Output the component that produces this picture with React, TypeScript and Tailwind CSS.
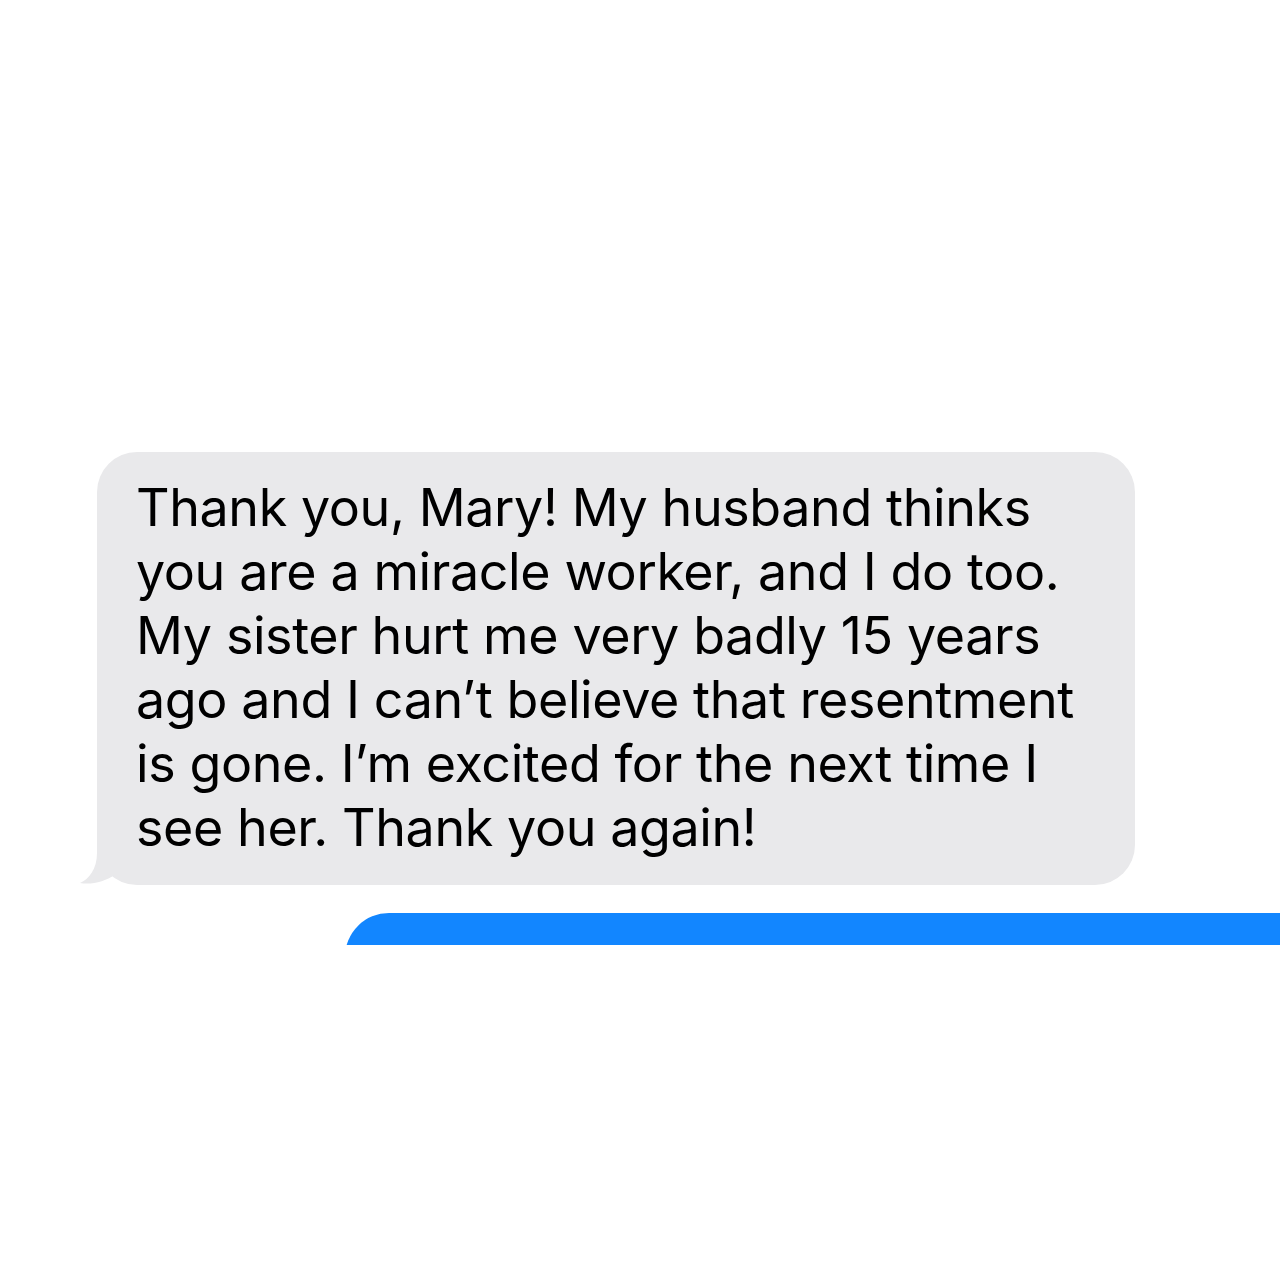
import React from 'react';

const lines = [
  'Thank you, Mary! My husband thinks',
  'you are a miracle worker, and I do too.',
  'My sister hurt me very badly 15 years',
  'ago and I can\u2019t believe that resentment',
  'is gone. I\u2019m excited for the next time I',
  'see her. Thank you again!',
];

const App: React.FC = () => {
  return (
    <div
      className="w-full h-[1280px] bg-white overflow-hidden pt-[452px]"
      style={{ fontFamily: 'Inter, "Noto Sans", sans-serif' }}
    >
      <div className="pl-[97px]">
        <div className="relative w-[1038px] h-[433px] rounded-[40px] bg-[#e9e9eb] pl-[39px] pt-[24px]">
          {/* tail */}
          <svg
            className="absolute left-[-18px] bottom-0"
            width="60"
            height="50"
            viewBox="0 0 60 50"
          >
            <path
              d="M18 0 L18 18 C18 34 10 44 1 48 C12 50 26 47 37 39 C40 42 48 46 58 48 L58 0 Z"
              fill="#e9e9eb"
            />
          </svg>
          <div className="relative text-[52px] leading-[64px] text-black tracking-[-0.4px]">
            {lines.map((l) => (
              <div key={l} className="whitespace-nowrap">
                {l}
              </div>
            ))}
          </div>
        </div>
      </div>
      <div className="mt-[28px] ml-[345px] h-[32px] overflow-hidden">
        <div className="h-[120px] rounded-tl-[44px] bg-[#1286ff]" />
      </div>
    </div>
  );
};

export default App;
